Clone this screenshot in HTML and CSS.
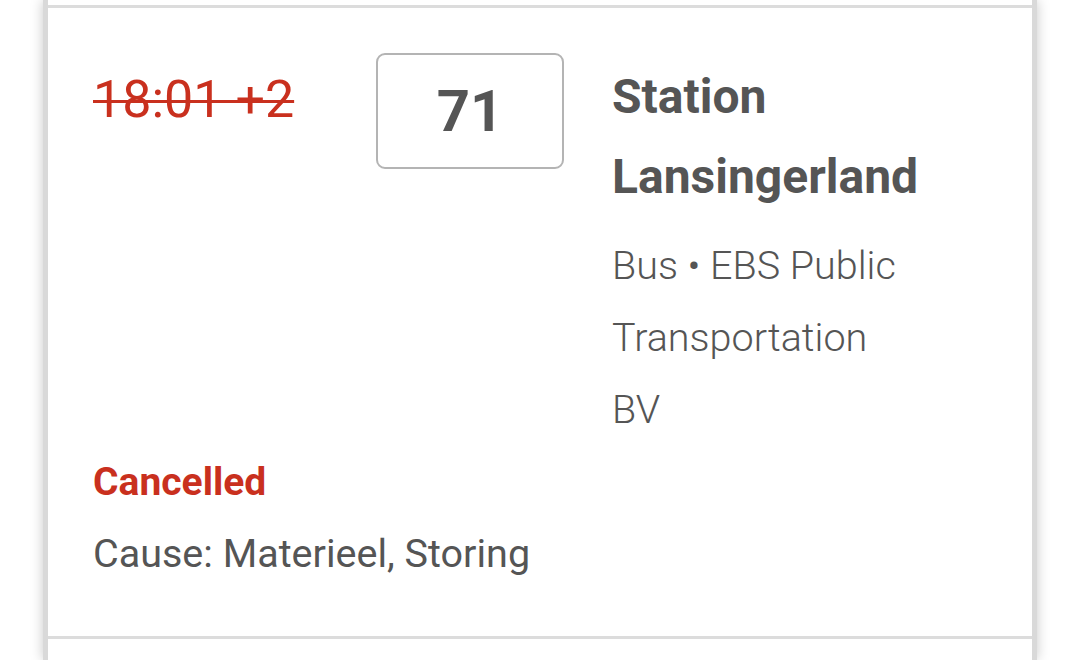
FILE: index.html
```html
<!DOCTYPE html>
<html>
<head>
<meta charset="utf-8">
<link rel="stylesheet" href="styles.css">
</head>
<body>
<div class="list">
  <div class="item item-prev"></div>
  <div class="item item-main">
    <div class="row">
      <div class="time">18:01 +2</div>
      <div class="line-box">71</div>
      <div class="info">
        <div class="dest">Station Lansingerland</div>
        <div class="operator">Bus • EBS Public Transportation BV</div>
      </div>
    </div>
    <div class="status">Cancelled</div>
    <div class="cause">Cause: Materieel, Storing</div>
  </div>
  <div class="item item-next"></div>
</div>
</body>
</html>
```
FILE: styles.css
```css
html, body {
  margin: 0;
  padding: 0;
  background: #ffffff;
  height: 660px;
  overflow: hidden;
}
body {
  font-family: Roboto, "Liberation Sans", sans-serif;
  color: #555555;
}
.list {
  margin: 0 43px;
  height: 660px;
  background: #ffffff;
  border-left: 5px solid #d9d9d9;
  border-right: 5px solid #d9d9d9;
  box-shadow: 0 0 12px rgba(0, 0, 0, 0.22);
}
.item-prev {
  height: 5px;
  border-bottom: 3px solid #dcdcdc;
}
.item-main {
  padding: 45px 45px 46px 45px;
}
.item-next {
  border-top: 3px solid #dcdcdc;
  height: 40px;
}
.row {
  display: flex;
  align-items: flex-start;
  gap: 48px;
}
.time {
  width: 235px;
  flex: none;
  margin-top: 17px;
  font-size: 52px;
  line-height: 60px;
  color: #c9301e;
  text-decoration: line-through;
  text-decoration-thickness: 3px;
  white-space: nowrap;
}
.line-box {
  flex: none;
  width: 184px;
  height: 112px;
  border: 2px solid #b4b4b4;
  border-radius: 9px;
  display: flex;
  align-items: center;
  justify-content: center;
  font-size: 58px;
  font-weight: 700;
  color: #555555;
}
.info {
  width: 307px;
  margin-top: 4px;
}
.dest {
  font-size: 48px;
  font-weight: 700;
  line-height: 80px;
}
.operator {
  margin-top: 13px;
  font-size: 39.5px;
  font-weight: 300;
  line-height: 72px;
}
.status {
  font-size: 39px;
  font-weight: 700;
  line-height: 72px;
  color: #c9301e;
}
.cause {
  font-size: 39.5px;
  line-height: 72px;
}
```
